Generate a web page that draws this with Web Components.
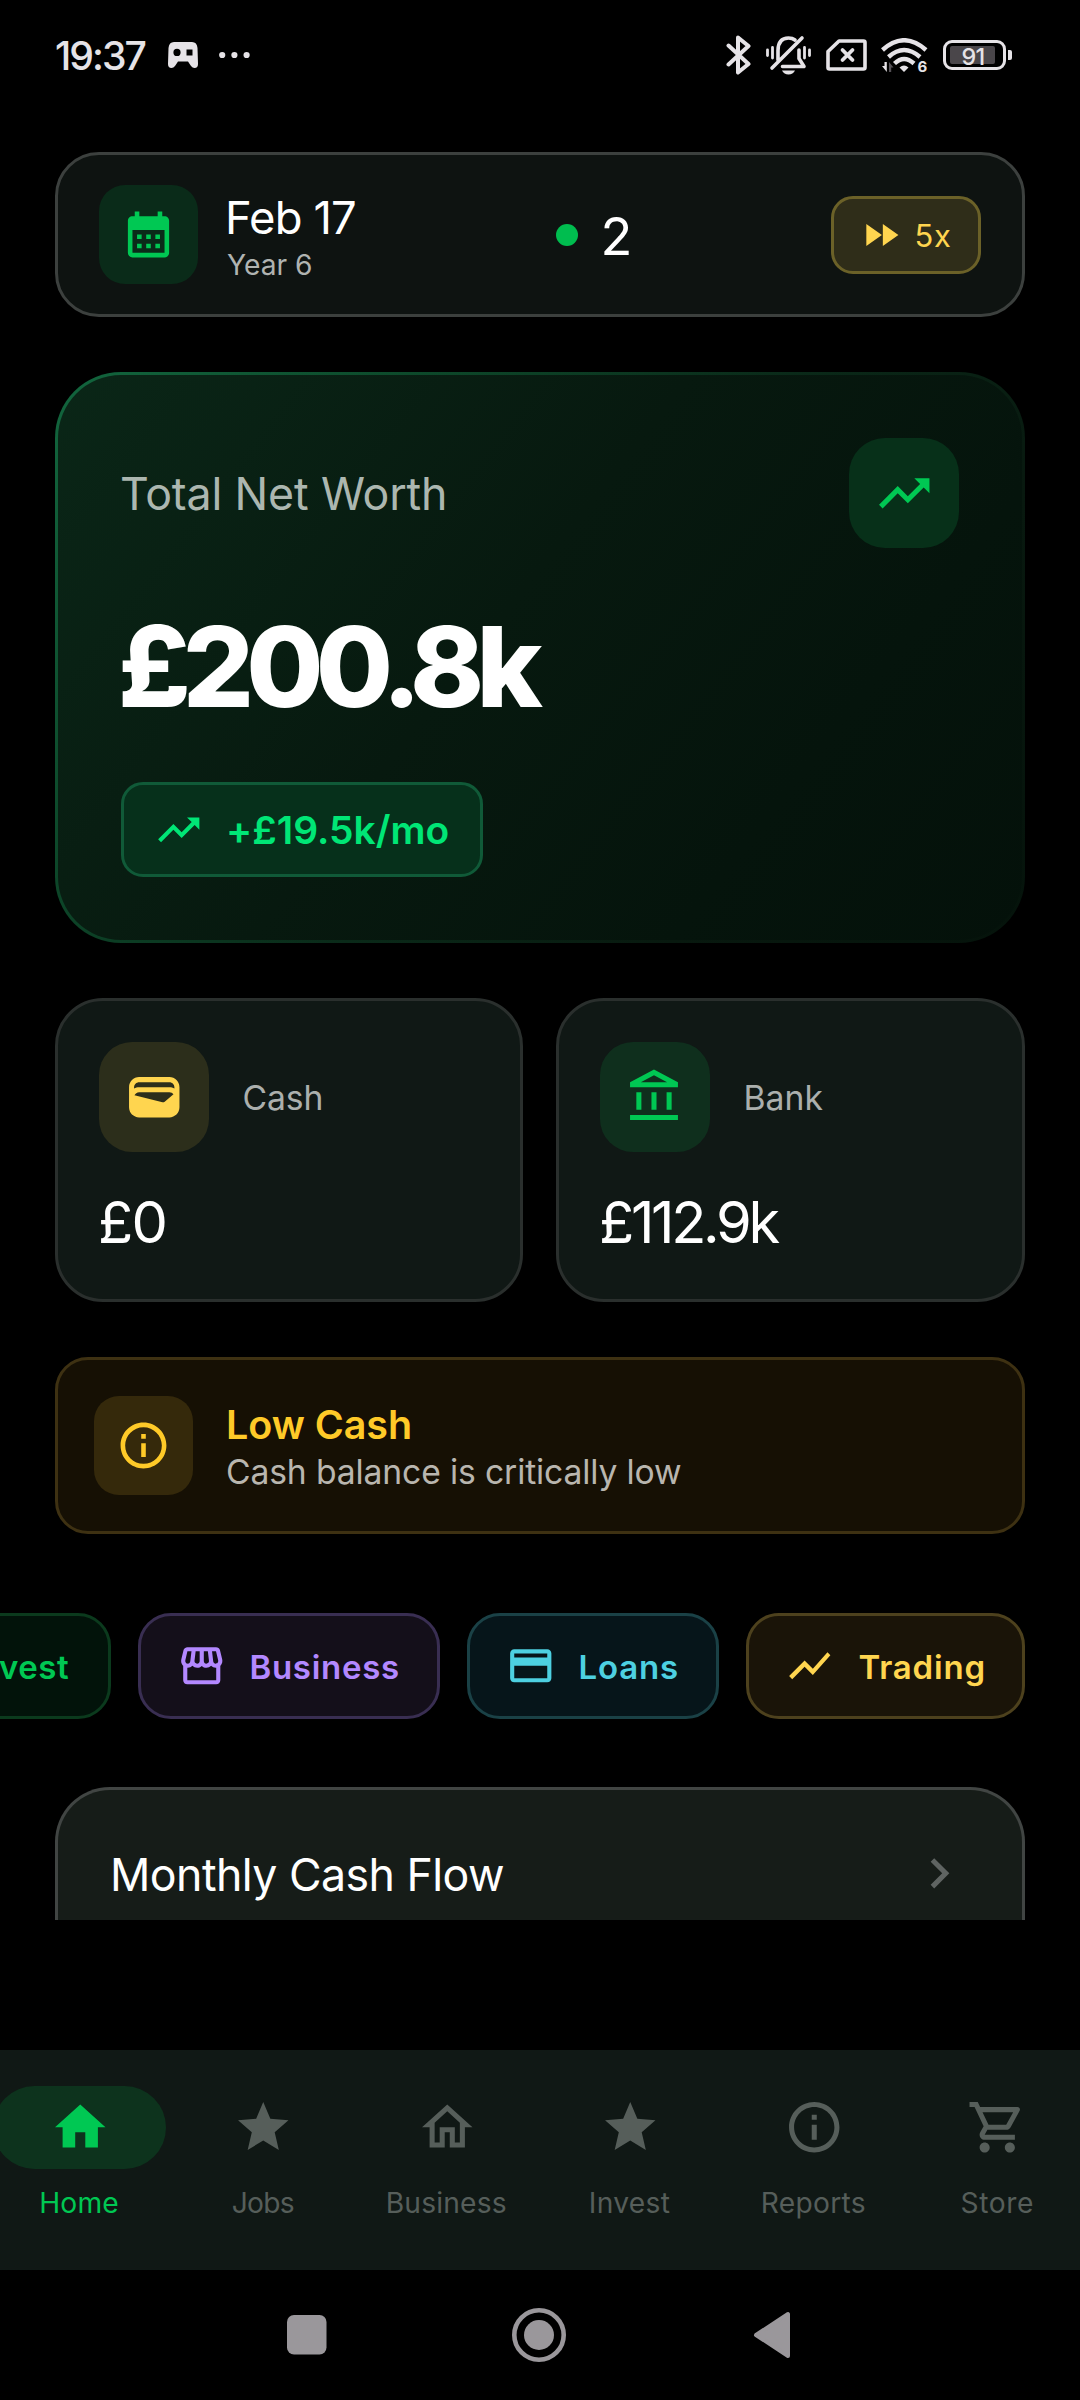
<!DOCTYPE html>
<html lang="en">
<head>
<meta charset="utf-8">
<title>Net worth dashboard</title>
<style>
html,body{margin:0;background:#000}
body{width:1080px;height:2400px;overflow:hidden;font-family:Inter,"Noto Sans",sans-serif;color:#fff}
</style>
</head>
<body>
<app-screen></app-screen>
<script>
const define=(name,html,setup)=>{
  const t=document.createElement('template');t.innerHTML=html;
  customElements.define(name,class extends HTMLElement{
    connectedCallback(){
      if(this.shadowRoot)return;
      this.attachShadow({mode:'open'}).append(t.content.cloneNode(true));
      if(setup)setup(this,this.shadowRoot);
    }
  });
};

const ICONS={
calendar:'<path d="M19 4h-1V2h-2v2H8V2H6v2H5c-1.11 0-1.99.9-1.99 2L3 20a2 2 0 0 0 2 2h14c1.1 0 2-.9 2-2V6c0-1.1-.9-2-2-2zm0 16H5V10h14v10zM9 14H7v-2h2v2zm4 0h-2v-2h2v2zm4 0h-2v-2h2v2zm-8 4H7v-2h2v2zm4 0h-2v-2h2v2zm4 0h-2v-2h2v2z"/>',
forward:'<path d="M4 18l8.5-6L4 6v12zm9-12v12l8.5-6L13 6z"/>',
trend:'<path d="M16 6l2.29 2.29-4.88 4.88-4-4L2 16.59 3.41 18l6-6 4 4 6.3-6.29L22 12V6z"/>',
wallet:'<path d="M18 4H6C3.79 4 2 5.79 2 8v8c0 2.21 1.79 4 4 4h12c2.21 0 4-1.79 4-4V8c0-2.21-1.79-4-4-4zm-1.86 9.77c-.24.2-.57.28-.88.2L4.15 11.25C4.45 10.52 5.16 10 6 10h12c.67 0 1.26.34 1.63.84l-3.49 2.93zM6 6h12c1.1 0 2 .9 2 2v.55c-.59-.34-1.27-.55-2-.55H6c-.73 0-1.41.21-2 .55V8c0-1.1.9-2 2-2z"/>',
bank:'<path d="M6.5 10h-2v7h2v-7zm6 0h-2v7h2v-7zm8.5 9H2v2h19v-2zm-2.5-9h-2v7h2v-7zm-7-6.74L16.71 6H6.29l5.21-2.74m0-2.26L2 6v2h19V6l-9.5-5z"/>',
info:'<path d="M11 7h2v2h-2zm0 4h2v6h-2zm1-9C6.48 2 2 6.48 2 12s4.48 10 10 10 10-4.48 10-10S17.52 2 12 2zm0 18c-4.41 0-8-3.59-8-8s3.59-8 8-8 8 3.59 8 8-3.59 8-8 8z"/>',
store:'<path d="M21.9 8.89l-1.05-4.37c-.22-.9-1-1.52-1.91-1.52H5.05c-.9 0-1.69.63-1.9 1.52L2.1 8.89c-.24 1.02-.02 2.06.62 2.88.08.11.19.19.28.29V19c0 1.1.9 2 2 2h14c1.1 0 2-.9 2-2v-6.94c.09-.09.2-.18.28-.28.64-.82.87-1.87.62-2.89zM18.91 4.99l1.05 4.37c.1.42.01.84-.25 1.17-.14.18-.44.47-.94.47-.61 0-1.14-.49-1.21-1.14L16.98 5l1.93-.01zM13 5h1.96l.54 4.52c.05.39-.07.78-.33 1.07-.22.26-.54.41-.95.41-.67 0-1.22-.59-1.22-1.31V5zM8.49 9.52L9.04 5H11v4.69c0 .72-.55 1.31-1.29 1.31-.34 0-.65-.15-.89-.41-.25-.29-.37-.68-.33-1.07zm-4.45-.16L5.05 5h1.97l-.58 4.86c-.08.65-.6 1.14-1.21 1.14-.49 0-.8-.29-.93-.47-.27-.32-.36-.75-.26-1.17zM5 19v-6.03c.08.01.15.03.23.03.87 0 1.66-.36 2.24-.95.6.6 1.4.95 2.31.95.87 0 1.65-.36 2.23-.93.59.57 1.39.93 2.29.93.84 0 1.64-.35 2.24-.95.58.59 1.37.95 2.24.95.08 0 .15-.02.23-.03V19H5z"/>',
card:'<path d="M20 4H4c-1.11 0-1.99.89-1.99 2L2 18c0 1.11.89 2 2 2h16c1.11 0 2-.89 2-2V6c0-1.11-.89-2-2-2zm0 14H4v-6h16v6zm0-10H4V6h16v2z"/>',
chart:'<path d="M3.5 18.49l6-6.01 4 4L22 6.92l-1.41-1.41-7.09 7.97-4-4L2 16.99z"/>',
chevron:'<path d="M10 6L8.59 7.41 13.17 12l-4.58 4.59L10 18l6-6z"/>',
home:'<path d="M10 20v-6h4v6h5v-8h3L12 3 2 12h3v8z"/>',
star:'<path d="M12 17.27L18.18 21l-1.64-7.03L22 9.24l-7.19-.61L12 2 9.19 8.63 2 9.24l5.46 4.73L5.82 21z"/>',
house:'<path d="M12 5.69l5 4.5V18h-2v-6H9v6H7v-7.81l5-4.5M12 3L2 12h3v8h6v-6h2v6h6v-8h3L12 3z"/>',
cart:'<path d="M15.55 13c.75 0 1.41-.41 1.75-1.03l3.58-6.49c.37-.66-.11-1.48-.87-1.48H5.21l-.94-2H1v2h2l3.6 7.59-1.35 2.44C4.52 15.37 5.48 17 7 17h12v-2H7l1.1-2h7.45zM6.16 6h12.15l-2.76 5H8.53L6.16 6zM7 18c-1.1 0-1.99.9-1.99 2S5.9 22 7 22s2-.9 2-2-.9-2-2-2zm10 0c-1.1 0-1.99.9-1.99 2s.89 2 1.99 2 2-.9 2-2-.9-2-2-2z"/>'
};

/* Material-style 24-unit glyph, sized by the "size" attribute */
define('m-icon','<style>:host{display:block;flex:none}svg{display:block;fill:currentColor}</style><svg viewBox="0 0 24 24"></svg>',(el,r)=>{
  const s=r.querySelector('svg'),n=el.getAttribute('size');
  s.innerHTML=ICONS[el.getAttribute('name')];
  s.style.width=s.style.height=n+'px';
});

/* Text whose box is its ink: "cap" is the capital height, "w" the ink width */
const pen=document.createElement('canvas').getContext('2d');
define('ink-text','<style>:host{display:block;flex:none;white-space:pre}span{display:block;width:max-content;padding-top:1px}</style><span></span>',(el,r)=>{
  const cap=+el.getAttribute('cap'),w=+el.getAttribute('w'),wt=el.getAttribute('weight')||420;
  const text=el.getAttribute('text'),size=cap/0.7273,s=r.querySelector('span');
  s.textContent=text;
  pen.font=`${wt} ${size}px Inter`;
  const m=pen.measureText(text),ink=m.actualBoundingBoxLeft+m.actualBoundingBoxRight;
  s.style.cssText=`font-size:${size}px;font-weight:${wt};line-height:${cap}px;margin-left:${m.actualBoundingBoxLeft}px;letter-spacing:${text.length>1?(w-ink)/(text.length-1):0}px`;
  el.style.width=w+'px';el.style.height=cap+'px';
});

define('icon-box','<style>:host{display:grid;place-items:center;flex:none;width:var(--s);height:var(--s);border-radius:var(--r);background:var(--bg);color:var(--fg)}</style><slot></slot>');

define('status-bar',`<style>
:host{display:flex;align-items:center;height:110px;padding:0 68px 0 56px;color:#e6e3e7}
svg{display:block;flex:none;fill:currentColor}
.game{margin-left:22px}.dots{margin-left:21px}.sp{flex:1}
.bat{display:flex;align-items:center;margin-left:15px}
.cell{box-sizing:border-box;width:63px;height:30px;border:3px solid;border-radius:9px;padding:3px 4px;display:flex}
.fill{width:45px;background:#4a464a;border-radius:2px;display:flex;align-items:center;flex:none}
.fill ink-text{margin-left:13px}
.tip{width:4px;height:10px;border-radius:0 2px 2px 0;background:currentColor;margin-left:2.5px}
.gen{font:700 15px Inter,sans-serif}
</style>
<ink-text text="19:37" cap="28.5" w="89.5" weight="500"></ink-text>
<svg class="game" width="30" height="26" viewBox="0 0 30 26"><path fill-rule="evenodd" d="M6 0H24Q29 0 29.5 6L30 22Q30 26 26.500 26Q24.500 26 23 24L20 19.500H10L7 24Q5.500 26 3.500 26Q0 26 0 22L.5 6Q1 0 6 0ZM9 6.800A3.600 3.600 0 1 0 9 14A3.600 3.600 0 1 0 9 6.800ZM18.500 7.500V13.500H24.500V7.500Z"/></svg>
<svg class="dots" width="31" height="8" viewBox="0 0 31 8"><circle cx="3.200" cy="4" r="3.100"/><circle cx="15.400" cy="4" r="3.100"/><circle cx="27.600" cy="4" r="3.100"/></svg>
<span class="sp"></span>
<svg width="25" height="40" viewBox="0 0 25 40"><path fill="none" stroke="currentColor" stroke-width="4" stroke-linejoin="round" stroke-linecap="round" d="M2.500 10.500L22.500 29L12 37.500V2.500L22.500 11L2.500 29.500"/></svg>
<svg style="margin-left:15px" width="45" height="40" viewBox="0 0 45 40"><g fill="none" stroke="currentColor" stroke-width="3.600" stroke-linecap="round" stroke-linejoin="round"><path d="M12 25V15.500Q12 3 22.500 3Q26.500 3 29 5M6 33L36 3"/><path d="M33 15V23.500L38 31.500H16.500"/></g><g stroke="currentColor" stroke-width="2.800" stroke-linecap="round"><path d="M1.500 15V20.500M6.500 12.500V23M38.500 12.500V23M43.500 15V20.500"/></g><path d="M16 35.500H29Q27 39.500 22.500 39.500Q18 39.500 16 35.500Z"/></svg>
<svg style="margin-left:15px" width="41" height="32" viewBox="0 0 41 32"><path fill="none" stroke="currentColor" stroke-width="3.600" stroke-linejoin="round" d="M13 2H37.500Q39 2 39 3.500V28.500Q39 30 37.500 30H3.500Q2 30 2 28.500V12.500Z"/><path stroke="currentColor" stroke-width="3.800" stroke-linecap="round" d="M16.500 11L26.500 21M26.500 11L16.500 21"/></svg>
<svg style="margin-left:14px" width="47" height="35" viewBox="0 0 47 35"><g fill="none" stroke="currentColor" stroke-width="4.400"><path d="M1.500 12Q23 -7.500 45 12"/><path d="M7.500 19Q23 5 39 19"/><path d="M13.500 25.500Q23 16.500 33 25.500"/></g><path d="M18.500 29.500Q23 25.500 27.500 29.500L23 34Z"/><path d="M1 28H3.500V24H5.800V34Z"/><path fill="#555156" d="M8 34V24L12.500 29.500H10.200V34Z"/><text class="gen" x="36.500" y="34">6</text></svg>
<span class="bat"><span class="cell"><span class="fill"><ink-text text="91" cap="17" w="21" weight="500"></ink-text></span></span><span class="tip"></span></span>`);

define('day-card',`<style>
:host{box-sizing:border-box;display:flex;align-items:center;justify-content:space-between;height:165px;padding:0 41px;border:3px solid #3c403e;border-radius:44px;background:#0e1311}
.date,.mid,.speed{display:flex;align-items:center}
.date{width:254px}
.txt{margin:5px 0 0 30px}.txt ink-text+ink-text{margin:20.5px 0 0 -1px;color:#b0b3b1}
.mid i{width:22px;height:22px;border-radius:50%;background:#00bd4f}.mid ink-text{margin:0 0 0 26px}
.speed{box-sizing:border-box;width:150px;height:78px;border:3px solid #6b6128;border-radius:22px;background:#2f2d19;color:#ffd54f;padding-left:24.5px}
.speed ink-text{margin:1px 0 0 14px}
</style>
<div class="date"><icon-box style="--s:99px;--r:26px;--bg:#0a2b19;--fg:#00c853"><m-icon name="calendar" size="55"></m-icon></icon-box>
<div class="txt"><ink-text text="Feb 17" cap="33" w="127"></ink-text><ink-text text="Year 6" cap="20.500" w="84"></ink-text></div></div>
<div class="mid"><i></i><ink-text text="2" cap="38" w="25"></ink-text></div>
<div class="speed"><m-icon name="forward" size="44"></m-icon><ink-text text="5x" cap="22.500" w="33.500"></ink-text></div>`);

define('worth-card',`<style>
:host{box-sizing:border-box;display:block;height:571px;margin-top:55px;padding:63px;border:3px solid transparent;border-radius:66px;
background:linear-gradient(128deg,#0a2617 0%,#07190f 45%,#05140c 75%,#04110a 100%) padding-box,linear-gradient(128deg,#12663e 0%,#0d4a2b 25%,#0a2a19 52%,#08190f 75%,#05130b 100%) border-box}
.top{display:flex;justify-content:space-between;align-items:center}
.top ink-text{color:#acb7b0;margin-left:1px}
.big{margin:77px 0 0 1px}
.delta{box-sizing:border-box;display:flex;align-items:center;width:362px;height:95px;margin-top:75.5px;border:3px solid #105a38;border-radius:22px;background:#06301b;color:#00e676;padding-left:30px}
.delta ink-text{margin-left:25.500px}
</style>
<div class="top"><ink-text text="Total Net Worth" cap="32.500" w="322"></ink-text><icon-box style="--s:110px;--r:36px;--bg:#073019;--fg:#00c853"><m-icon name="trend" size="60.500"></m-icon></icon-box></div>
<ink-text class="big" text="£200.8k" cap="81.300" w="421.500" weight="760"></ink-text>
<div class="delta"><m-icon name="trend" size="49.500"></m-icon><ink-text text="+£19.5k/mo" cap="28.300" w="218.500" weight="600"></ink-text></div>`);

define('account-card',`<style>
:host{box-sizing:border-box;display:block;height:304px;padding:41px;border:3px solid #2a2f2d;border-radius:48px;background:#101815}
.row{display:flex;align-items:center;gap:35.500px;color:#abafad;margin-bottom:48px}
::slotted([slot=value]){margin-left:2px}
</style><div class="row"><slot></slot></div><slot name="value"></slot>`);

define('low-alert',`<style>
:host{box-sizing:border-box;display:flex;align-items:center;height:177px;margin-top:55px;padding-left:36px;border:3px solid #3e3112;border-radius:33px;background:#161004}
.t{margin:3px 0 0 35px;color:#ffca28}.t ink-text+ink-text{color:#b9b6af;margin-top:20.500px}
</style><icon-box style="--s:99px;--r:25px;--bg:#35290b;--fg:#ffca28"><m-icon name="info" size="55"></m-icon></icon-box>
<div class="t"><ink-text text="Low Cash" cap="28.700" w="182" weight="600"></ink-text><ink-text text="Cash balance is critically low" cap="24.500" w="453"></ink-text></div>`);

define('quick-chip',`<style>
:host{box-sizing:border-box;display:flex;align-items:center;flex:none;height:106px;padding:0 38.500px 0 36px;border:3px solid var(--line);border-radius:33px;background:var(--bg);color:var(--fg);gap:25px}
</style><slot></slot>`);

define('flow-card',`<style>
:host{box-sizing:border-box;display:flex;align-items:flex-start;justify-content:space-between;height:133px;margin-top:68px;padding:0 53px 0 55px;border:3px solid #414543;border-bottom:0;border-radius:55px 55px 0 0;background:#161c18}
ink-text{margin-top:67.500px}m-icon{margin-top:52.5px;color:#5f6462}
</style><ink-text text="Monthly Cash Flow" cap="32.500" w="391"></ink-text><m-icon name="chevron" size="60.500"></m-icon>`);

define('nav-item',`<style>
:host{display:flex;flex-direction:column;align-items:center;width:183.500px;flex:none;color:#565e5a}
.p{display:grid;place-items:center;width:173px;height:83px;border-radius:42px;margin:36px 0 23px}
:host([active]){color:#00c853}:host([active]) .p{background:#0d331d}
</style><div class="p"><slot name="icon"></slot></div><slot></slot>`);

define('system-nav',`<style>
:host{display:flex;align-items:center;height:130px;padding-left:286.500px;color:#9a979b}
svg{display:block;flex:none;fill:currentColor}
</style>
<svg width="40" height="40"><rect width="39.500" height="39.500" rx="7"/></svg>
<svg style="margin-left:185px" width="54" height="54"><circle cx="27" cy="27" r="24.700" fill="none" stroke="currentColor" stroke-width="4.600"/><circle cx="27" cy="27" r="15"/></svg>
<svg style="margin-left:187px" width="38" height="48" viewBox="0 0 38 48"><path stroke="currentColor" stroke-width="4" stroke-linejoin="round" d="M35 3V45L3 24Z"/></svg>`);

define('app-screen',`<style>
:host{display:flex;flex-direction:column;width:1080px;height:2400px;overflow:hidden;background:#000}
main{height:1810px;box-sizing:border-box;padding:42px 55px 0;overflow:hidden;flex:none}
.accounts{display:grid;grid-template-columns:468px 469px;gap:33px;margin-top:55px}
.chips{display:flex;justify-content:flex-end;gap:27.500px;margin-top:79px}
nav{display:flex;justify-content:center;box-sizing:border-box;height:220px;margin-top:130px;background:#101815;flex:none;padding-right:3px}
</style>
<status-bar></status-bar>
<main>
<day-card></day-card>
<worth-card></worth-card>
<div class="accounts">
<account-card><icon-box style="--s:110px;--r:33px;--bg:#2c2e1b;--fg:#ffd54f"><m-icon name="wallet" size="60.500"></m-icon></icon-box><ink-text text="Cash" cap="24.500" w="77"></ink-text><ink-text slot="value" text="£0" cap="42" w="63.500"></ink-text></account-card>
<account-card><icon-box style="--s:110px;--r:33px;--bg:#0f2f1d;--fg:#00c853"><m-icon name="bank" size="60.500"></m-icon></icon-box><ink-text text="Bank" cap="24.500" w="78"></ink-text><ink-text slot="value" text="£112.9k" cap="42" w="177.500"></ink-text></account-card>
</div>
<low-alert></low-alert>
<div class="chips">
<quick-chip style="--line:#0b3a1d;--bg:#02130a;--fg:#00c853"><m-icon name="trend" size="49.500"></m-icon><ink-text text="Invest" cap="24" w="98" weight="600"></ink-text></quick-chip>
<quick-chip style="--line:#392e52;--bg:#140f1a;--fg:#b388ff"><m-icon name="store" size="49.500"></m-icon><ink-text text="Business" cap="24" w="146.500" weight="600"></ink-text></quick-chip>
<quick-chip style="--line:#1a4146;--bg:#06151a;--fg:#4dd0e1"><m-icon name="card" size="49.500"></m-icon><ink-text text="Loans" cap="24" w="96.500" weight="600"></ink-text></quick-chip>
<quick-chip style="--line:#4d411d;--bg:#1a1408;--fg:#ffd54f"><m-icon name="chart" size="49.500"></m-icon><ink-text text="Trading" cap="24" w="124" weight="600"></ink-text></quick-chip>
</div>
<flow-card></flow-card>
</main>
<nav>
<nav-item active><m-icon slot="icon" name="home" size="60.500"></m-icon><ink-text text="Home" cap="20.500" w="77"></ink-text></nav-item>
<nav-item><m-icon slot="icon" name="star" size="60.500"></m-icon><ink-text text="Jobs" cap="20.500" w="61"></ink-text></nav-item>
<nav-item><m-icon slot="icon" name="house" size="60.500"></m-icon><ink-text text="Business" cap="20.500" w="118"></ink-text></nav-item>
<nav-item><m-icon slot="icon" name="star" size="60.500"></m-icon><ink-text text="Invest" cap="20.500" w="79"></ink-text></nav-item>
<nav-item><m-icon slot="icon" name="info" size="60.500"></m-icon><ink-text text="Reports" cap="20.500" w="102"></ink-text></nav-item>
<nav-item><m-icon slot="icon" name="cart" size="60.500"></m-icon><ink-text text="Store" cap="20.500" w="71.500"></ink-text></nav-item>
</nav>
<system-nav></system-nav>`);
</script>
</body>
</html>
